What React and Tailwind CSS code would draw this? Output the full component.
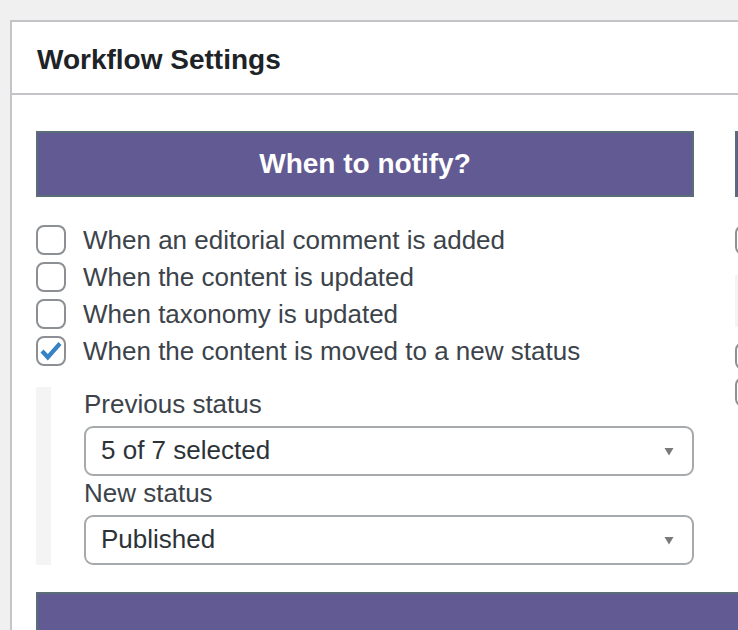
import React from "react";

const font = { fontFamily: '"Liberation Sans", Arial, sans-serif' };

function Checkbox({ checked, label }) {
  return (
    <div className="flex items-center h-[30px]">
      <span className="w-[30px] h-[30px] shrink-0 rounded-[8px] border-2 border-[#8c8f94] bg-white flex items-center justify-center">
        {checked && (
          <svg width="26" height="26" viewBox="0 0 26 26">
            <path d="M2.5 14.5 L5.5 11.5 L9.8 16 L20.5 4 L23.5 7 L9.8 22.5 Z" fill="#3582c4" />
          </svg>
        )}
      </span>
      <span className="ml-[17px] text-[26px] leading-[30px] text-[#3c434a] whitespace-nowrap">{label}</span>
    </div>
  );
}

function Select({ value }) {
  return (
    <div className="w-[610px] h-[50px] rounded-[9px] border-2 border-[#a7aaad] bg-white flex items-center justify-between pl-[15px] pr-[18px] pb-[3px]">
      <span className="text-[26px] leading-[30px] text-[#2c3338]">{value}</span>
      <svg width="10" height="9" viewBox="0 0 10 9" className="mt-[3px]">
        <path d="M0.5 1 H9.5 L5 8.5 Z" fill="#7a7a7a" />
      </svg>
    </div>
  );
}

export default function App() {
  return (
    <div className="w-[738px] h-[630px] overflow-hidden bg-[#f0f0f1] pt-[20px] pl-[10px]" style={font}>
      <div className="w-[780px] h-[700px] bg-white border-2 border-[#c3c4c7]">
        {/* header */}
        <div className="h-[73px] border-b-2 border-[#c3c4c7] flex items-center pl-[25px] pt-[4px]">
          <h2 className="text-[28px] font-bold text-[#1d2327] leading-none">Workflow Settings</h2>
        </div>

        {/* body */}
        <div className="pt-[36px] pl-[24px]">
          <div className="flex gap-[41px]">
            {/* left column */}
            <div className="w-[658px] shrink-0">
              <div className="h-[66px] bg-[#625a92] border-2 border-[#5b6e77] flex items-center justify-center">
                <span className="text-white font-bold text-[28px]">When to notify?</span>
              </div>
              <div className="mt-[28px] flex flex-col gap-[7px]">
                <Checkbox label="When an editorial comment is added" />
                <Checkbox label="When the content is updated" />
                <Checkbox label="When taxonomy is updated" />
                <Checkbox checked label="When the content is moved to a new status" />
              </div>
              <div className="mt-[21px] flex">
                <div className="w-[15px] bg-[#f4f4f5]" />
                <div className="ml-[33px]">
                  <div className="mt-[2px] mb-[7px] text-[26px] leading-[30px] text-[#3c434a]">Previous status</div>
                  <Select value="5 of 7 selected" />
                  <div className="mt-[2px] mb-[7px] text-[26px] leading-[30px] text-[#3c434a]">New status</div>
                  <Select value="Published" />
                </div>
              </div>
            </div>

            {/* right column */}
            <div className="w-[658px] shrink-0">
              <div className="h-[66px] bg-[#625a92] border-2 border-[#5b6e77]" />
              <div className="mt-[28px]">
                <span className="block w-[30px] h-[30px] rounded-[8px] border-2 border-[#8c8f94]" />
              </div>
              <div className="mt-[20px] w-[15px] h-[52px] bg-[#f4f4f5]" />
              <div className="mt-[15px] flex flex-col gap-[7px]">
                <span className="block w-[30px] h-[28px] rounded-[8px] border-2 border-[#8c8f94]" />
                <span className="block w-[30px] h-[30px] rounded-[8px] border-2 border-[#8c8f94]" />
              </div>
            </div>
          </div>

          <div className="mt-[27px] h-[80px] bg-[#625a92] border-t-2 border-l-2 border-[#5b6e77]" />
        </div>
      </div>
    </div>
  );
}
